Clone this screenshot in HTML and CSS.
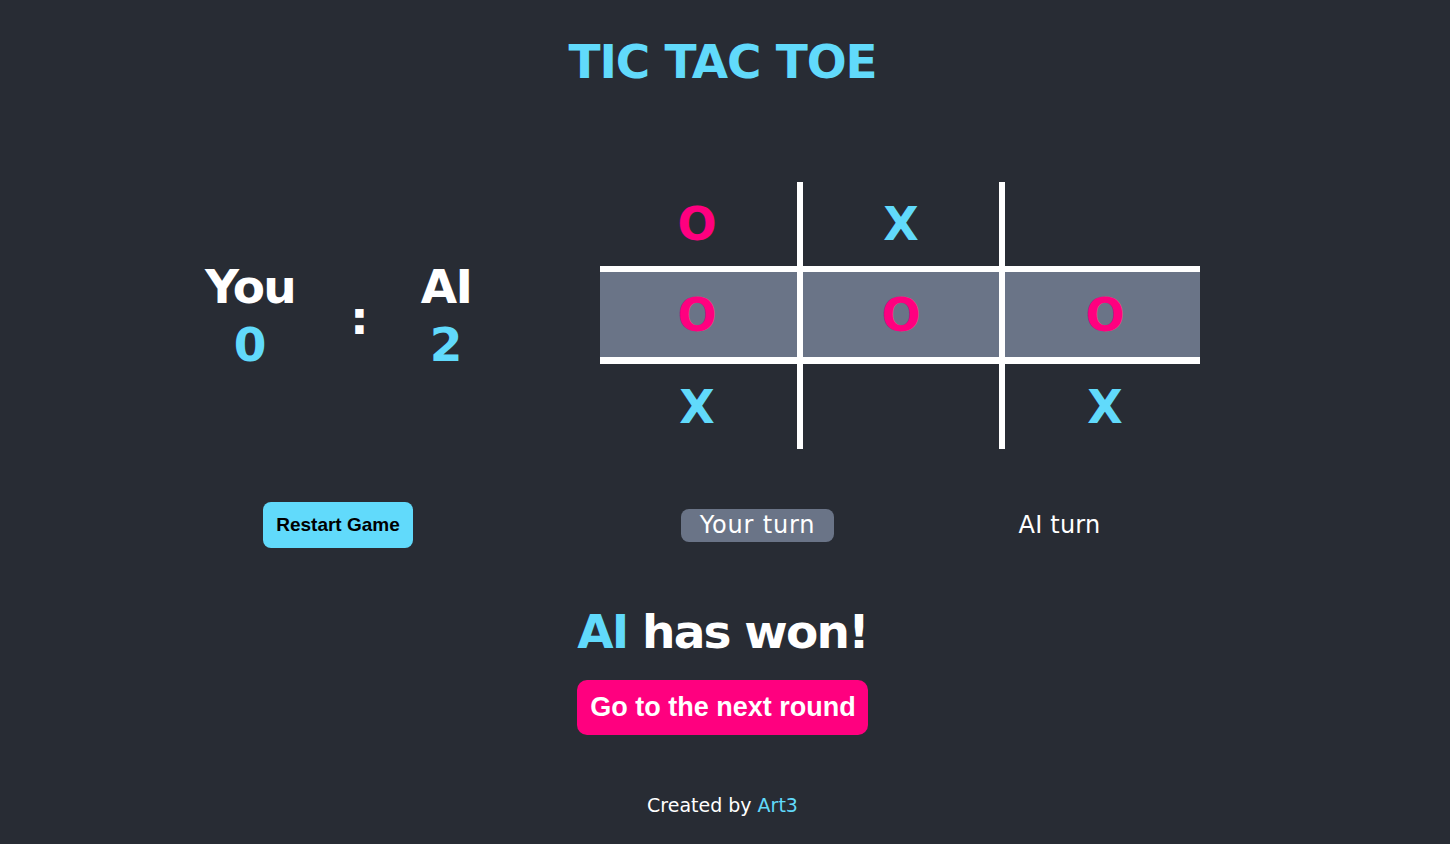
FILE: index.html
```html
<!DOCTYPE html>
<html lang="en">
<head>
<meta charset="utf-8">
<title>Tic Tac Toe</title>
<link rel="stylesheet" href="styles.css">
</head>
<body>
<div class="app">
  <h1 class="title">TIC TAC TOE</h1>
  <main class="game">
    <div class="score">
      <div class="player">
        <div class="name">You</div>
        <div class="points">0</div>
      </div>
      <div class="colon">:</div>
      <div class="player">
        <div class="name">AI</div>
        <div class="points">2</div>
      </div>
    </div>
    <div class="board">
      <div class="cell c1 r1 o">O</div>
      <div class="cell c2 r1 x">X</div>
      <div class="cell c3 r1"></div>
      <div class="cell c1 r2 o win">O</div>
      <div class="cell c2 r2 o win">O</div>
      <div class="cell c3 r2 o win">O</div>
      <div class="cell c1 r3 x">X</div>
      <div class="cell c2 r3"></div>
      <div class="cell c3 r3 x">X</div>
    </div>
    <div class="controls">
      <button class="restart">Restart Game</button>
    </div>
    <div class="turns">
      <span class="turn active">Your turn</span>
      <span class="turn">AI turn</span>
    </div>
  </main>
  <h2 class="result"><span class="accent">AI</span> has won!</h2>
  <div class="next-wrap">
    <button class="next">Go to the next round</button>
  </div>
  <footer class="footer">Created by <span class="accent">Art3</span></footer>
</div>
</body>
</html>
```
FILE: styles.css
```css
* { box-sizing: border-box; }
html, body { margin: 0; padding: 0; }
body {
  background: #282c34;
  color: #ffffff;
  font-family: "DejaVu Sans", "Noto Sans", sans-serif;
  width: 1450px;
  height: 844px;
  overflow: hidden;
}
.app {
  width: 1445px;
  display: flex;
  flex-direction: column;
  align-items: center;
}
.title {
  margin: 0;
  padding-top: 34px;
  font-size: 47px;
  line-height: 56px;
  font-weight: 700;
  letter-spacing: -1.1px;
  color: #61dafb;
  text-align: center;
}
.game {
  align-self: flex-start;
  margin-top: 92px;
  margin-left: 138px;
  display: grid;
  grid-template-columns: 400px 600px;
  grid-template-rows: 267px 46px;
  column-gap: 62px;
  row-gap: 53px;
}
.score {
  align-self: center;
  justify-self: center;
  margin-left: 20px;
  display: grid;
  grid-template-columns: 100px 96px 100px;
  align-items: center;
  font-weight: 700;
  font-size: 47px;
  letter-spacing: -1.8px;
}
.player { text-align: center; line-height: 58px; }
.name { color: #ffffff; }
.points { color: #61dafb; letter-spacing: 0; }
.colon {
  text-align: center;
  padding-left: 23px;
  line-height: 58px;
  letter-spacing: 0;
  padding-top: 4px;
}
.board {
  display: grid;
  grid-template-columns: 200px 202px 198px;
  grid-template-rows: 87px 92px 88px;
}
.cell {
  display: flex;
  align-items: center;
  justify-content: center;
  font-weight: 700;
  font-size: 46px;
  border: 0 solid #ffffff;
}
.cell.c1 { border-right-width: 3px; padding-right: 3px; }
.cell.c2 { border-left-width: 3px; border-right-width: 3px; }
.cell.c3 { border-left-width: 3px; padding-left: 5px; }
.cell.r1 { border-bottom-width: 3px; }
.cell.r2 { border-top-width: 3px; border-bottom-width: 4px; }
.cell.r3 { border-top-width: 3px; }
.cell.o { color: #ff007f; }
.cell.x { color: #61dafb; }
.cell.win { background: #6a7487; }
.controls { display: flex; justify-content: center; align-items: center; }
.restart {
  font-family: "Liberation Sans", Arial, sans-serif;
  font-weight: 700;
  font-size: 19px;
  line-height: 22px;
  padding: 12px 13px;
  background: #61dafb;
  color: #000000;
  border: none;
  border-radius: 8px;
}
.turns {
  display: grid;
  grid-template-columns: 315px 285px;
  align-items: center;
  justify-items: center;
}
.turn {
  font-size: 24px;
  line-height: 27px;
  letter-spacing: 0.8px;
  padding: 3px 19px;
  border-radius: 8px;
  color: #ffffff;
}
.turn.active { background: #6a7487; }
.turn + .turn { margin-left: 4px; letter-spacing: 0.2px; }
.result {
  margin: 56px 0 0;
  font-size: 47px;
  line-height: 56px;
  font-weight: 700;
  letter-spacing: -1.8px;
  color: #ffffff;
}
.accent { color: #61dafb; }
.next-wrap { margin-top: 20px; }
.next {
  font-family: "Liberation Sans", Arial, sans-serif;
  font-weight: 700;
  font-size: 27px;
  line-height: 31px;
  padding: 12px 12px 12px 13px;
  background: #ff007f;
  color: #ffffff;
  border: none;
  border-radius: 10px;
}
.footer {
  margin-top: 59px;
  font-size: 19px;
  line-height: 23px;
  color: #ffffff;
}
.footer .accent { color: #61dafb; }
```
